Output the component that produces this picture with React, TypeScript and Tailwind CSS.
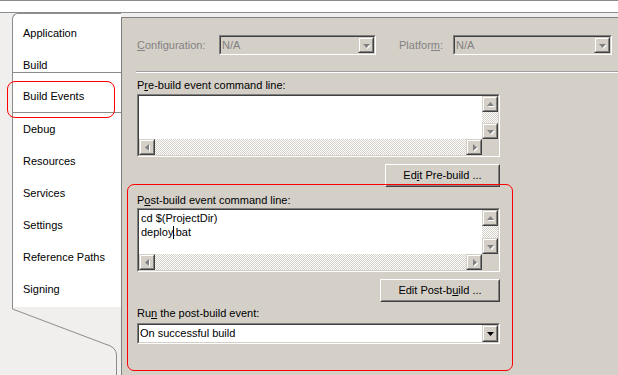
import React from 'react';

type Dir = 'up' | 'down' | 'left' | 'right';

const points: Record<Dir, string> = {
  up: '3.5,1 7,5 0,5',
  down: '0,2 7,2 3.5,6',
  left: '1,3.5 5,0 5,7',
  right: '2,0 2,7 6,3.5',
};

const Arrow: React.FC<{ dir: Dir; active?: boolean }> = ({ dir, active }) => (
  <svg width="7" height="7" viewBox="0 0 7 7" className="block overflow-visible">
    {!active && <polygon points={points[dir]} fill="#ffffff" transform="translate(1 1)" />}
    <polygon points={points[dir]} fill={active ? '#000000' : '#808080'} />
  </svg>
);

const Raised: React.FC<{ className?: string; children?: React.ReactNode }> = ({ className = '', children }) => (
  <div className={`border border-t-[#d4d0c8] border-l-[#d4d0c8] border-r-[#404040] border-b-[#404040] ${className}`}>
    <div className="h-full w-full flex items-center justify-center bg-[#d4d0c8] border border-t-white border-l-white border-r-[#808080] border-b-[#808080]">
      {children}
    </div>
  </div>
);

const ScrollBtn: React.FC<{ dir: Dir; active?: boolean }> = ({ dir, active }) => (
  <Raised className="w-4 h-4 shrink-0">
    <Arrow dir={dir} active={active} />
  </Raised>
);

const Sunken: React.FC<{ className?: string; children?: React.ReactNode }> = ({ className = '', children }) => (
  <div className={`border border-t-[#808080] border-l-[#808080] border-r-white border-b-white ${className}`}>
    <div className="h-full border border-t-[#404040] border-l-[#404040] border-r-[#d4d0c8] border-b-[#d4d0c8]">
      {children}
    </div>
  </div>
);

const checker =
  'bg-[image:repeating-conic-gradient(#ffffff_0%_25%,#d4d0c8_0%_50%)] bg-[length:2px_2px]';

const CommandBox: React.FC<{ height: string; children?: React.ReactNode }> = ({ height, children }) => (
  <Sunken className={`w-[363px] ${height}`}>
    <div className="flex h-full">
      <div className="flex-1 flex flex-col min-w-0">
        <div className="flex-1 bg-white pl-[2px] pt-px leading-[14px] text-black">{children}</div>
        <div className="h-4 flex">
          <ScrollBtn dir="left" />
          <div className={`flex-1 ${checker}`} />
          <ScrollBtn dir="right" />
        </div>
      </div>
      <div className="w-4 flex flex-col">
        <ScrollBtn dir="up" />
        <div className={`flex-1 ${checker}`} />
        <ScrollBtn dir="down" />
        <div className="h-4 bg-[#d4d0c8]" />
      </div>
    </div>
  </Sunken>
);

const PushButton: React.FC<{ width: string; children: React.ReactNode }> = ({ width, children }) => (
  <div className="w-[363px] flex justify-end">
    <div className={`${width} h-[23px] border border-t-white border-l-white border-r-[#404040] border-b-[#404040]`}>
      <div className="h-full flex items-center justify-center bg-[#d4d0c8] border border-t-[#d4d0c8] border-l-[#d4d0c8] border-r-[#808080] border-b-[#808080] pb-px">
        {children}
      </div>
    </div>
  </div>
);

const Combo: React.FC<{ width: string }> = ({ width }) => (
  <Sunken className={`${width} h-[20px]`}>
    <div className="flex h-full bg-[#d4d0c8]">
      <div className="flex-1 pl-px leading-[16px] text-[#808080]">N/A</div>
      <Raised className="w-4 h-full">
        <Arrow dir="down" />
      </Raised>
    </div>
  </Sunken>
);

const tabs = ['Debug', 'Resources', 'Services', 'Settings', 'Reference Paths', 'Signing'];

const Sidebar: React.FC = () => (
  <div className="w-[121px] shrink-0 flex flex-col">
    <div className="ml-[12px] w-[109px] h-[294px] bg-white border-l border-t border-[#8c8c8c] rounded-tl-[6px] pt-[3px]">
      <div className="h-[32px] flex items-center pl-[10px]">Application</div>
      <div className="h-[23px] pl-[10px] pt-[10px] leading-[13px]">Build</div>
      <div className="h-[41px] pl-[10px] pt-[17px] leading-[13px] border-t border-b border-[#8c8c8c]">Build Events</div>
      {tabs.map((t) => (
        <div key={t} className="h-[32px] flex items-center pl-[10px]">
          {t}
        </div>
      ))}
    </div>
    <svg width="121" height="68" viewBox="0 0 121 68" className="block">
      <path d="M12.5 0 V2 L105 37 Q116.5 40 116.5 48 V68" fill="none" stroke="#8c8c8c" strokeWidth="1" />
    </svg>
  </div>
);

export default function App() {
  return (
    <div className="relative w-[618px] h-[375px] overflow-hidden bg-[#f1efed] font-['Liberation_Sans',Arial,sans-serif] text-[11px] leading-[13px] text-black">
      <div className="h-[13px] bg-white border-t border-b border-[#8c8c8c]" />
      <div className="flex h-[362px]">
        <Sidebar />
        <div className="flex-1 mt-[4px] bg-[#d4d0c8] border-t border-l border-[#808080] flex flex-col">
          <div className="mt-[17px] h-[20px] flex items-center pl-[15px]">
            <div className="w-[82px] text-[#848284]">
              <span className="underline">C</span>onfiguration:
            </div>
            <Combo width="w-[157px]" />
            <div className="ml-[23px] w-[54px] text-[#848284]">
              Platfor<span className="underline">m</span>:
            </div>
            <Combo width="w-[159px]" />
          </div>
          <div className="mt-[16px] ml-[14px] border-t border-b border-t-[#a0a0a0] border-b-white" />
          <div className="pl-[15px] flex flex-col">
            <div className="mt-[6px]">
              P<span className="underline">r</span>e-build event command line:
            </div>
            <div className="mt-[2px]">
              <CommandBox height="h-[63px]" />
            </div>
            <div className="mt-[7px]">
              <PushButton width="w-[115px]">
                <span>
                  Ed<span className="underline">i</span>t Pre-build ...
                </span>
              </PushButton>
            </div>
            <div className="mt-[7px]">
              P<span className="underline">o</span>st-build event command line:
            </div>
            <div className="mt-px">
              <CommandBox height="h-[64px]">
                <div>cd $(ProjectDir)</div>
                <div>
                  deploy
                  <span className="relative">
                    .<span className="absolute left-0 top-0 h-[13px] w-px bg-black" />
                  </span>
                  bat
                </div>
              </CommandBox>
            </div>
            <div className="mt-[7px]">
              <PushButton width="w-[120px]">
                <span>
                  Edit Post-b<span className="underline">u</span>ild ...
                </span>
              </PushButton>
            </div>
            <div className="mt-[5px]">
              Ru<span className="underline">n</span> the post-build event:
            </div>
            <div className="mt-[3px]">
              <Sunken className="w-[363px] h-[21px]">
                <div className="flex h-full bg-white">
                  <div className="flex-1 pl-px leading-[17px]">On successful build</div>
                  <Raised className="w-4 h-full">
                    <Arrow dir="down" active />
                  </Raised>
                </div>
              </Sunken>
            </div>
          </div>
        </div>
      </div>
      <div className="absolute left-[7px] top-[81px] w-[108px] h-[37px] border border-[#ff0000] rounded-[8px] pointer-events-none" />
      <div className="absolute left-[127px] top-[184px] w-[386px] h-[187px] border border-[#ff0000] rounded-[7px] pointer-events-none" />
    </div>
  );
}
